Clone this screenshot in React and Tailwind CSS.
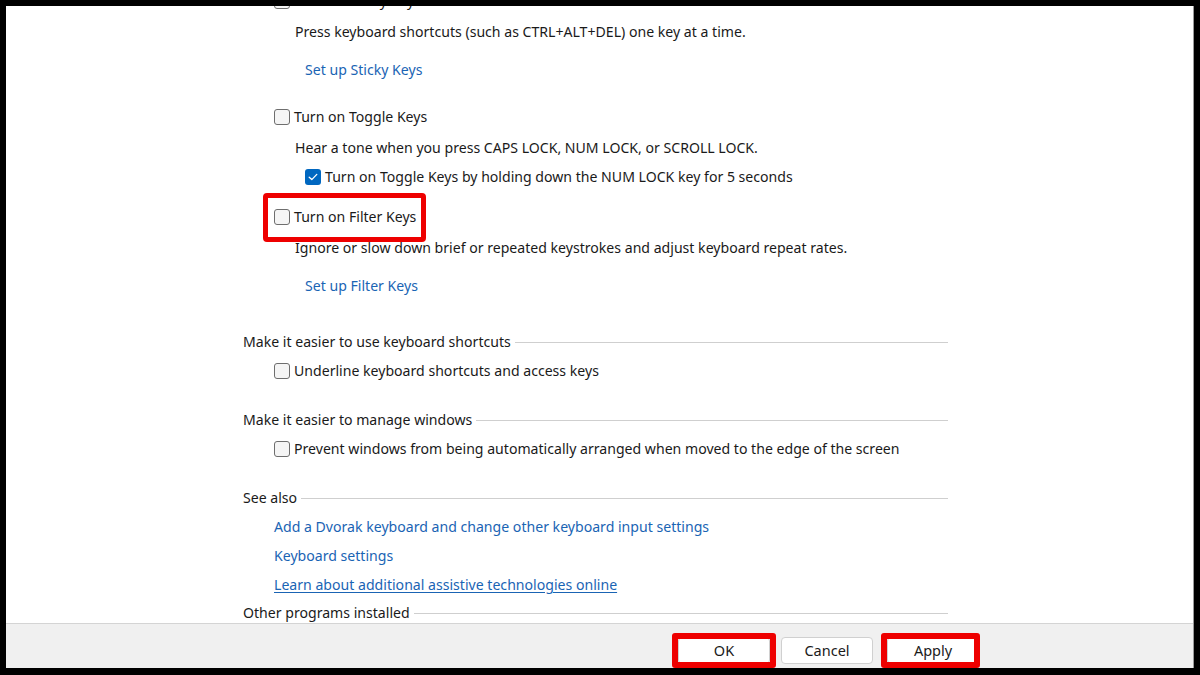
import React from 'react'

const Box = ({ checked = false }) => (
    checked ? (
        <span className="w-[16px] h-[16px] rounded-[3px] bg-[#0067c0] flex items-center justify-center shrink-0">
            <svg width="10" height="8" viewBox="0 0 10 8" fill="none">
                <path d="M1.2 4.2 L3.8 6.6 L8.8 1.4" stroke="#fff" strokeWidth="1.3" strokeLinecap="round" strokeLinejoin="round" />
            </svg>
        </span>
    ) : (
        <span className="w-[16px] h-[16px] rounded-[3px] border border-[#6e6e6e] bg-[#f5f5f5] shrink-0" />
    )
)

const Row = ({ mt, pl, children }) => (
    <div className={`h-[28px] flex items-center ${mt} ${pl}`}>{children}</div>
)

const Check = ({ label, checked }) => (
    <span className="flex items-center gap-[4px]">
        <Box checked={checked} />
        <span>{label}</span>
    </span>
)

const Heading = ({ children }) => (
    <div className="flex items-center w-[705px]">
        <span>{children}</span>
        <span className="flex-1 h-px bg-[#cfcfcf] ml-[4px] mt-[1px]" />
    </div>
)

const Btn = ({ label, highlight, ring, className }) => (
    <div className={`relative ${className}`}>
        {highlight && <div className={`absolute left-[-6px] top-[-4px] bottom-[-4px] border-[6px] border-[#ee0000] rounded-[3px] ${ring}`} />}
        <button className="w-[92px] h-[27px] bg-white border border-[#d0d0d0] rounded-[4px] text-[14.5px] text-[#1a1a1a]">{label}</button>
    </div>
)

export default function App() {
    return (
        <div className="w-[1200px] h-[675px] bg-black pt-[6px] pl-[6px] pr-[6px] pb-[7px]" style={{ fontFamily: '"Noto Sans", "Open Sans", sans-serif' }}>
            <div className="w-full h-full bg-white flex flex-col border-r border-[#9a9a9a]">
                <div className="flex-1 overflow-hidden text-[14.1px] text-[#1a1a1a] pl-[237px]">
                    <Row mt="-mt-[19px]" pl="pl-[31px]"><Check label="Turn on Sticky Keys" /></Row>
                    <Row mt="mt-[3px]" pl="pl-[52px]">Press keyboard shortcuts (such as CTRL+ALT+DEL) one key at a time.</Row>
                    <Row mt="mt-[10px]" pl="pl-[62px]"><a className="text-[#1a64b4]">Set up Sticky Keys</a></Row>
                    <Row mt="mt-[19px]" pl="pl-[31px]"><Check label="Turn on Toggle Keys" /></Row>
                    <Row mt="mt-[3px]" pl="pl-[52px]">Hear a tone when you press CAPS LOCK, NUM LOCK, or SCROLL LOCK.</Row>
                    <Row mt="mt-[1px]" pl="pl-[62px]"><Check checked label="Turn on Toggle Keys by holding down the NUM LOCK key for 5 seconds" /></Row>
                    <Row mt="mt-[12px]" pl="pl-[31px]">
                        <span className="relative">
                            <span className="absolute left-[-11px] right-[-10px] top-[-13px] bottom-[-14px] border-[5px] border-[#ee0000] rounded-[4px]" />
                            <Check label="Turn on Filter Keys" />
                        </span>
                    </Row>
                    <Row mt="mt-[3px]" pl="pl-[52px]">Ignore or slow down brief or repeated keystrokes and adjust keyboard repeat rates.</Row>
                    <Row mt="mt-[10px]" pl="pl-[62px]"><a className="text-[#1a64b4]">Set up Filter Keys</a></Row>
                    <Row mt="mt-[28px]" pl="pl-0"><Heading>Make it easier to use keyboard shortcuts</Heading></Row>
                    <Row mt="mt-[1px]" pl="pl-[31px]"><Check label="Underline keyboard shortcuts and access keys" /></Row>
                    <Row mt="mt-[21px]" pl="pl-0"><Heading>Make it easier to manage windows</Heading></Row>
                    <Row mt="mt-[1px]" pl="pl-[31px]"><Check label="Prevent windows from being automatically arranged when moved to the edge of the screen" /></Row>
                    <Row mt="mt-[21px]" pl="pl-0"><Heading>See also</Heading></Row>
                    <Row mt="mt-[1px]" pl="pl-[31px]"><a className="text-[#1a64b4]">Add a Dvorak keyboard and change other keyboard input settings</a></Row>
                    <Row mt="mt-[1px]" pl="pl-[31px]"><a className="text-[#1a64b4]">Keyboard settings</a></Row>
                    <Row mt="mt-[1px]" pl="pl-[31px]"><a className="text-[#1a64b4] underline underline-offset-2">Learn about additional assistive technologies online</a></Row>
                    <Row mt="mt-0" pl="pl-0"><Heading>Other programs installed</Heading></Row>
                </div>
                <div className="h-[45px] shrink-0 bg-[#f0f0f0] border-t border-[#d4d4d4] flex items-start pt-[13px] pl-[672px]">
                    <Btn label="OK" highlight ring="right-[-6px]" />
                    <Btn label="Cancel" className="ml-[11px]" />
                    <Btn label="Apply" highlight ring="right-[-1px]" className="ml-[14px]" />
                </div>
            </div>
        </div>
    )
}
